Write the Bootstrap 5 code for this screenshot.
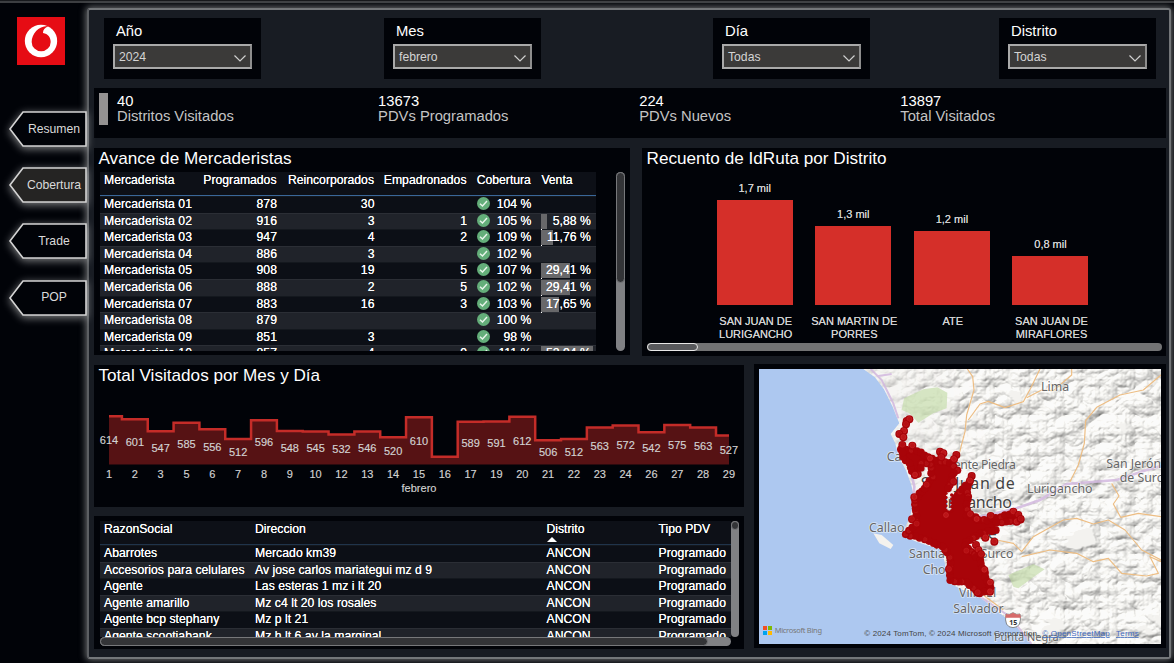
<!DOCTYPE html>
<html lang="es">
<head>
<meta charset="utf-8">
<meta name="viewport" content="width=device-width, initial-scale=1">
<title>Cobertura</title>
<link href="https://cdn.jsdelivr.net/npm/bootstrap@5.3.0/dist/css/bootstrap.min.css" rel="stylesheet">
<style>
body{background:#010308;color:#fff;font-family:"Liberation Sans",Arial,sans-serif;font-size:12.2px;line-height:1.2;height:663px;overflow:hidden;border-top:1px solid #17191c}
.strip{height:2px;background:#3c3e41;flex:none}
.side{width:87px;padding-top:14px}
.logo{width:48px;height:48px;margin:0 0 46px 17px;display:block}
.tab{height:35px;margin-left:9px;width:78px;margin-bottom:21.2px;border:0;background:none;color:#dadada;font-size:12.2px;padding:1px 1px 0 13px}
.tab svg{left:-9px;top:-9px;width:96px;height:54px;overflow:visible}
.tab polygon{fill:#010308;stroke:#d4d4d4;stroke-width:1.6;filter:drop-shadow(0 2px 4px rgba(255,255,255,.5))}
.tab.on polygon{fill:#252423}
.board{margin-top:5px;width:1084px;height:651px;background:#181c23;border:2px solid #74777a;border-left-color:#5c5f63;border-radius:3px;box-shadow:0 0 7px 1px #707375;padding:8px 0 0 5px}
.tile{background:#010308}
.slicer{width:157px;height:61px;padding:5px 9px}
.slicer label{font-size:14.8px;padding-left:3px;line-height:17px;display:block;margin-bottom:4px}
.pick{height:25px;width:139px;border:2px solid #a5a5a5;border-color:#a9a9a9 #8d8d8d #a9a9a9 #a9a9a9;background:#3b3a39;color:#d4d4d4;padding:2px 4px 0 4px}
.pick svg{margin-top:1px}
.kpis{width:1072px;height:50px;margin-top:9px;padding:5px 0 0 5px;font-size:14.75px;line-height:15px}
.kpis .cell{width:261.1px;padding-top:.6px}
.kpis .cap{color:#c4c4c4}
.mark-bar{width:9px;height:32px;background:#949292;margin-right:9px}
h2{font-size:17.15px;line-height:18px;margin:0 0 2px;font-weight:400}
.av{width:536px;height:207px;padding:1px 4.5px 0}
.rc{width:524px;height:208px;padding:1px 4.5px 0;margin-left:12px}
.grid-w{width:496px;height:179px;overflow:hidden;margin:3px 0 0 1.5px;text-shadow:0 0 .6px #fff}
.hd{background:#0d1017;border-bottom:1px solid #3a6799}
.rw{display:grid;height:16.6px;line-height:14.6px;background:#0c0f16;white-space:nowrap;border-top:1px solid #14181e;letter-spacing:.04px}
.rw:nth-child(odd){background:#20232a;border-color:#2b2e35}
.c6{display:grid;grid-template-columns:98px 84px 97.5px 92.5px 64.4px 59.6px}
.c6>*{padding-right:5px;text-align:right}
.hd.c6>*{padding-right:5.5px}
.c6>:first-child{text-align:left;padding-left:4px}
.c4{display:grid;grid-template-columns:151px 291.5px 112px 77px}
.c4>*{padding-left:4px}
.bar-v{left:5px;top:0;height:15px;background:#68686a}
.bar-box::before{content:"";position:absolute;left:5px;top:0;height:16px;border-left:1px dotted #fff}
.vs{width:8.5px;border-radius:5px;background:#808184}
.vs div{background:#333437;border:1px solid #77787b;border-radius:5px}
.val{font-size:11px;color:#d2d2d2;line-height:13px;text-shadow:0 0 .6px #ccc}
.bars{height:137px;padding-left:58.9px;margin-top:-1px}
.bars .col-b{width:98.6px}
.bars .blk{width:76px;background:#d52f29;margin-top:5px}
.hs{height:8px;border-radius:5px;background:#727374;width:515px}
.hs div{height:8px;border-radius:5px;background:#58595c;border:1px solid #e8e8e8;width:51px}
.tv{width:650px;height:142px;padding:1px 4.5px 0}
.tv text{font-size:11px;fill:#d2d2d2;text-anchor:middle;stroke:#d2d2d2;stroke-width:.15px}
.pd{width:650px;height:133px;margin-top:9px;padding:5px 5px 0 6px}
.pd .grid-w{width:631px;height:116px;margin:0}
.mp{width:412px;height:284px;margin:-1px 0 0 10px;padding:5px}
.mp svg{display:block}
.mp text{font-family:"Noto Sans",sans-serif;fill:#666;font-size:37px;stroke:#fff;stroke-width:5px;stroke-opacity:.55;paint-order:stroke}
.mp .big{font-size:48px;fill:#444}
.mp .att{font-family:"Liberation Sans",sans-serif;font-size:24px;fill:#444;stroke:none}
</style>
</head>
<body>
<div class="strip"></div>
<div class="d-flex">
<nav class="side d-flex flex-column flex-shrink-0" id="side">
  <svg class="logo" viewBox="0 0 144 144"><rect width="144" height="144" fill="#e60c14"/><circle cx="72" cy="72" r="48.500" fill="#fff"/><path d="M44 75C44 51 64 28 91 27L94 28C83 32 78 39 78 48C93 50 101 61 101 75A28.500 28 0 0 1 44 75Z" fill="#e60c14"/></svg>
</nav>
<main class="board">
  <div class="d-flex" id="slicers"></div>
  <section class="tile kpis d-flex">
    <div class="mark-bar"></div>
    <div class="cell"><div>40</div><div class="cap">Distritos Visitados</div></div>
    <div class="cell"><div>13673</div><div class="cap">PDVs Programados</div></div>
    <div class="cell"><div>224</div><div class="cap">PDVs Nuevos</div></div>
    <div class="cell"><div>13897</div><div class="cap">Total Visitados</div></div>
  </section>
  <div class="d-flex" style="margin-top:10px">
    <section class="tile av">
      <h2>Avance de Mercaderistas</h2>
      <div class="d-flex">
        <div class="grid-w" id="av"><div class="hd c6" style="height:24px;line-height:16px"><span>Mercaderista</span><span>Programados</span><span>Reincorporados</span><span>Empadronados</span><span>Cobertura</span><span class="text-start" style="padding-left:5px">Venta</span></div></div>
        <div class="vs" style="height:179px;margin:3px 0 0 20px"><div style="height:111px"></div></div>
      </div>
    </section>
    <section class="tile rc">
      <h2>Recuento de IdRuta por Distrito</h2>
      <div class="bars d-flex align-items-end" id="bars"></div>
      <div class="d-flex val text-center" id="cats" style="padding-left:59.900px;margin-top:10px;height:28px"></div>
      <div class="hs"><div></div></div>
    </section>
  </div>
  <div class="d-flex" style="margin-top:9px">
    <div>
      <section class="tile tv">
        <h2>Total Visitados por Mes y Día</h2>
        <svg id="area" width="650" height="110" viewBox="94 386 650 110" style="display:block;margin-left:-4.500px"></svg>
      </section>
      <section class="tile pd">
        <div class="d-flex">
          <div class="grid-w" id="pd"><div class="hd c4" style="height:24px;line-height:16px;border-color:#20344b"><span>RazonSocial</span><span>Direccion</span><span class="position-relative">Distrito<svg class="position-absolute" style="left:4px;top:16px" width="10" height="5"><path d="M0 5L5 0L10 5Z" fill="#fff"/></svg></span><span>Tipo PDV</span></div></div>
          <div class="vs"><div style="height:9px"></div></div>
        </div>
        <div class="vs" style="width:631px;height:8.500px"><div style="width:608px;height:8.500px"></div></div>
      </section>
    </div>
    <section class="tile mp">
      <svg width="402" height="275" viewBox="27 27 1206 825">
        <defs>
          <filter id="hill" x="0" y="0" width="100%" height="100%" color-interpolation-filters="sRGB"><feTurbulence type="turbulence" baseFrequency=".0095 .012" numOctaves="4" seed="8"/><feColorMatrix values="0 0 0 0 0 0 0 0 0 0 0 0 0 0 0 1 1 0 0 0"/><feDiffuseLighting surfaceScale="8" diffuseConstant="1.15" lighting-color="#f4f3f0"><feDistantLight azimuth="235" elevation="60"/></feDiffuseLighting></filter>
          <linearGradient id="fade" x1="0" x2="1" y1=".45" y2=".3"><stop offset=".3" stop-color="#fff" stop-opacity=".15"/><stop offset=".6" stop-color="#fff" stop-opacity=".7"/></linearGradient>
          <mask id="mk"><rect width="1240" height="860" fill="url(#fade)"/></mask>
          <clipPath id="land"><path d="M340 27L375 52L402 88L428 140L448 190L422 222L436 250L446 292L468 330L484 375L494 420L480 470L455 525L500 545L575 570L592 640L595 668L640 690L690 712L745 755L800 800L845 852H1233V27Z"/></clipPath>
        </defs>
        <rect x="27" y="27" width="1206" height="825" fill="#adc8f0"/>
        <g clip-path="url(#land)"><rect x="27" y="27" width="1206" height="825" fill="#f2f1ee"/><g mask="url(#mk)"><rect x="27" y="27" width="1206" height="825" filter="url(#hill)"/></g>
        <path d="M462 115L520 88L562 82L592 98L590 145L550 160L505 188L478 160L455 150Z" fill="#c3dba7" opacity=".65"/><path d="M775 645L850 612L884 628L850 652L805 685L790 680Z" fill="#c3dba7" opacity=".65"/></g>
        <path d="M370 520L395 525L430 555L422 567L388 550Z" fill="#f4f2ee"/>
        <g fill="none" stroke="#edbd83" stroke-width="3.500" stroke-linejoin="round"><path d="M652 27L668 50L672 90L650 165L645 215L628 280"/><path d="M655 180L690 132L715 124L765 143L820 125L842 85L870 27"/><path d="M830 113L875 90L910 92L965 45V27"/><path d="M1233 45L1180 90L1110 105L1040 142L1007 182L1003 250L985 315L960 365"/><path d="M1085 370L1107 408L1090 432L1112 472L1165 460L1233 470"/><path d="M740 540L790 550L815 575L850 530L940 480L980 475L1030 492L1075 480L1125 510L1175 570L1233 600"/><path d="M700 705L760 750M815 590L900 570L980 580L1030 605L1075 595L1115 640L1190 648L1225 640L1200 590L1233 605"/></g>
        <g fill="none" stroke="#d2b8df" stroke-width="6" opacity=".85"><path d="M362 27L395 60L410 90L430 130L445 175M385 48L425 42"/><path d="M484 340L493 380L490 410M670 475L800 445L870 420L950 372L1100 360L1190 330L1233 318" stroke-width="8"/><path d="M690 710L780 770L845 852"/></g>
        <text x="873" y="92">Lima</text><text x="410" y="302">Callao</text><text x="568" y="328" textLength="230">Puente Piedra</text><text class="big" x="512" y="388" textLength="282">San Juan de</text><text class="big" x="540" y="445" textLength="246">Lurigancho</text><text x="831" y="399">Lurigancho</text><text x="1069" y="324">San Jerónimo</text><text x="1109" y="366">de Surco</text><text x="357" y="516">Callao</text><text class="big" x="667" y="537" textLength="73">Ate</text><text x="477" y="593">Santiago de Surco</text><text x="518" y="642">Chorrillos</text><text x="627" y="712">Villa El</text><text x="610" y="759">Salvador</text><text x="732" y="842" style="font-size:33px" textLength="194">Punta Negra</text>
        <g id="dots" fill="#a80409"></g>
        <g><path d="M768 762Q778 766 789 758Q800 766 810 762Q817 802 789 803Q761 802 768 762Z" fill="#fff" stroke="#555" stroke-width="2"/><path d="M768 762Q778 766 789 758Q800 766 810 762L813 773H766Z" fill="#d66b6b"/><text x="778" y="795" style="font-size:21px;fill:#333;stroke:none;font-weight:700">15</text></g>
        <path d="M39 798h12v12h-12z" fill="#f25022"/><path d="M54 798h12v12h-12z" fill="#7fba00"/><path d="M39 813h12v12h-12z" fill="#00a4ef"/><path d="M54 813h12v12h-12z" fill="#ffb900"/>
        <text x="74" y="820" style="font-size:22.500px;fill:#777;stroke:none" textLength="142">Microsoft Bing</text>
        <text class="att" x="343" y="828" textLength="525">© 2024 TomTom, © 2024 Microsoft Corporation,</text><text class="att" x="877" y="828" textLength="202" style="fill:#3e68bd;text-decoration:underline">© OpenStreetMap</text><text class="att" x="1098" y="828" textLength="68" style="fill:#3e68bd;text-decoration:underline">Terms</text>
      </svg>
    </section>
  </div>
</main>
</div>
<script>
const $=id=>document.getElementById(id), add=(id,h)=>$(id).insertAdjacentHTML('beforeend',h);
['Resumen','Cobertura','Trade','POP'].forEach((t,i)=>add('side',`<button class="tab position-relative ${i==1?'on':''}"><svg class="position-absolute"><polygon points="10,27 23,10 86,10 86,44 23,44"/></svg><span class="position-relative">${t}</span></button>`));
[['Año','2024',10],['Mes','febrero',123],['Día','Todas',172],['Distrito','Todas',129]].forEach(s=>add('slicers',`<div class="tile slicer" style="margin-left:${s[2]}px"><label>${s[0]}</label><div class="pick d-flex align-items-center justify-content-between"><span>${s[1]}</span><svg width="12" height="7" fill="none" stroke="#d0d0d0" stroke-width="1.200"><path d="M.5.500L6 6L11.500.500"/></svg></div></div>`));
const ok='<svg width="13" height="13" viewBox="0 0 13 13" style="position:relative;top:0;margin-right:6px"><circle cx="6.500" cy="6.500" r="6.500" fill="#64ae7a"/><path d="M3 6.800L5.500 9L10 4" fill="none" stroke="#e9f5ec" stroke-width="1.400"/></svg>';
[['01',878,30,'',104],['02',916,3,1,105,'5,88'],['03',947,4,2,109,'11,76'],['04',886,3,'',102],['05',908,19,5,107,'29,41'],['06',888,2,5,102,'29,41'],['07',883,16,3,103,'17,65'],['08',879,'','',100],['09',851,3,'',98],['10',857,4,9,111,'52,94']].forEach(r=>add('av',`<div class="rw c6"><span>Mercaderista ${r[0]}</span><span>${r[1]}</span><span>${r[2]}</span><span>${r[3]}</span><span class="d-flex justify-content-between" style="padding-left:5px">${ok}<span>${r[4]} %</span></span><span class="position-relative ${r[5]?'bar-box':''}">${r[5]?`<i class="bar-v position-absolute" style="width:${parseFloat(r[5].replace(',','.'))*.97}px"></i><span class="position-relative">${r[5]} %</span>`:''}</span></div>`));
[['Abarrotes','Mercado km39'],['Accesorios para celulares','Av jose carlos mariategui mz d 9'],['Agente','Las esteras 1 mz i lt 20'],['Agente amarillo','Mz c4 lt 20 los rosales'],['Agente bcp stephany','Mz p lt 21'],['Agente scootiabank','Mz h lt 6 av la marginal']].forEach(r=>add('pd',`<div class="rw c4"><span>${r[0]}</span><span>${r[1]}</span><span>ANCON</span><span>Programado</span></div>`));
[['1,7 mil',105,'SAN JUAN DE<br>LURIGANCHO'],['1,3 mil',79,'SAN MARTIN DE<br>PORRES'],['1,2 mil',74,'ATE'],['0,8 mil',49,'SAN JUAN DE<br>MIRAFLORES']].forEach(b=>{add('bars',`<div class="col-b d-flex flex-column align-items-center val">${b[0]}<div class="blk" style="height:${b[1]}px"></div></div>`);add('cats',`<div style="width:98.600px">${b[2]}</div>`)});
const days=[1,2,3,5,6,7,8,9,10,12,13,14,15,16,17,19,20,21,22,23,24,26,27,28,29], vals=[614,601,547,585,556,512,596,548,545,532,546,520,610,432,589,591,612,506,512,563,572,542,575,563,527];
const st=25.83,y=v=>416.3+(614-v)*.222;let p='',tx='';
vals.forEach((v,i)=>{const c=109+i*st,a=Math.max(109,c-st/2),b=Math.min(729,c+st/2);p+=`${a},${y(v)} ${b},${y(v)} `;
if(v!=432)tx+=`<text x="${c}" y="${(y(v)+464.5)/2+3.9}">${v}</text>`;tx+=`<text x="${c}" y="478">${days[i]}</text>`});
$('area').innerHTML=`<polygon points="109,464.5 ${p}729,464.5" fill="#561214"/><polyline points="${p}" fill="none" stroke="#c42c28" stroke-width="2.500"/>${tx}<text x="419" y="492">febrero</text>`;
/* visited points: solid city outline with round markers along its edge */
const poly=[[455,266],[500,272],[545,298],[600,310],[622,330],[606,350],[600,375],[588,400],[588,450],[605,452],[605,405],[630,395],[655,370],[652,420],[650,465],[700,482],[790,462],[810,480],[740,490],[735,508],[690,522],[650,545],[645,558],[690,598],[703,640],[722,685],[690,700],[650,668],[600,660],[600,590],[575,558],[510,533],[468,522],[500,495],[497,455],[495,420],[525,385],[548,350],[540,312],[515,312],[505,340],[492,345],[480,312],[458,290]];
let d=`<polygon points="${poly.join(' ')}"/>`,s=7;
const rnd=()=>(s=(s*16807)%2147483647)/2147483647;
poly.forEach((a,i)=>{const b=poly[(i+1)%poly.length],n=Math.max(1,Math.round(Math.hypot(b[0]-a[0],b[1]-a[1])/13)),thin=i>6&&i<11;for(let k=0;k<n;k++){const j=thin?0:5,x=a[0]+(b[0]-a[0])*k/n+(rnd()-.5)*j,yy=a[1]+(b[1]-a[1])*k/n+(rnd()-.5)*j;d+=`<circle cx="${x.toFixed(1)}" cy="${yy.toFixed(1)}" r="${thin?5:11.5}"/>`;if(!thin&&rnd()>.7)d+=`<circle cx="${x.toFixed(1)}" cy="${yy.toFixed(1)}" r="6" fill="#b8181b" stroke="#cf3d3b" stroke-width="1" opacity=".55"/>`}});
[[470,183],[478,178],[468,193],[462,213],[448,222],[460,232],[457,255],[487,257],[570,275],[580,280],[619,285],[612,298],[665,348],[660,362],[574,292],[790,455],[805,465],[800,485],[812,477],[733,545],[678,555],[685,570],[693,583],[706,533],[486,478],[493,412],[649,573],[703,630],[597,628],[720,668],[683,698],[720,695],[660,463],[495,345],[610,365],[588,466],[530,375],[540,296],[722,468],[680,478],[500,492]].forEach((c,i)=>d+=`<circle cx="${c[0]}" cy="${c[1]}" r="12"/><circle cx="${c[0]}" cy="${c[1]-1}" r="7.500" fill="#c0181b" stroke="#dd4a48" stroke-width="1.200" opacity="${i%2?.8:.5}"/>`);
$('dots').innerHTML=d;
</script>
<script src="https://cdn.jsdelivr.net/npm/bootstrap@5.3.0/dist/js/bootstrap.bundle.min.js"></script>
</body>
</html>
